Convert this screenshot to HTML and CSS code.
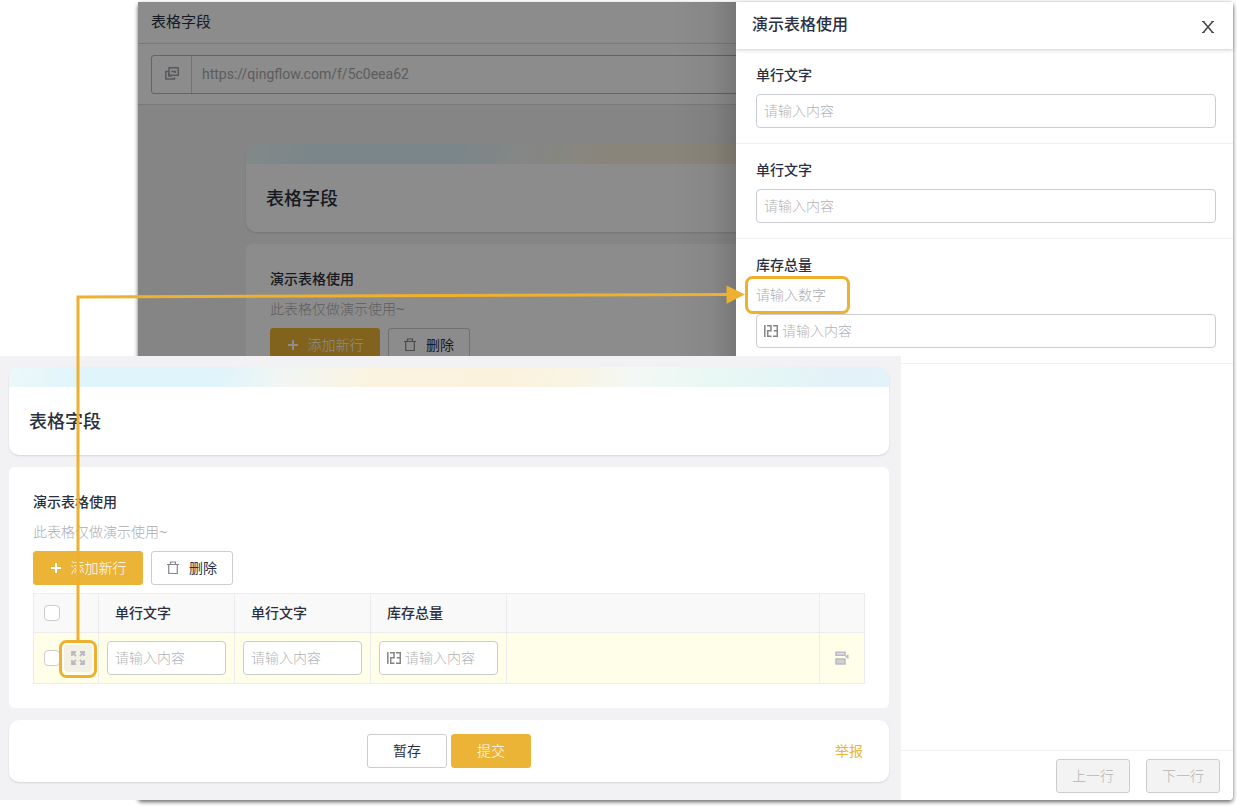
FILE: index.html
```html
<!DOCTYPE html>
<html lang="zh-CN">
<head>
<meta charset="utf-8">
<title>表格字段</title>
<link rel="stylesheet" href="styles.css">
</head>
<body>
<main class="stage">
  <div class="window">
    <section class="page" aria-label="表格字段">
      <header class="page-header">表格字段</header>
      <div class="page-toolbar">
        <div class="url-box">
          <button class="url-copy" type="button" aria-label="复制链接">
            <svg width="14" height="13" viewBox="0 0 14 13" fill="none" stroke="#a0a2aa" stroke-width="1.5"><path d="M4 .8h9.200v7.400H4z"/><path d="M4 4.500H.8v7.500h8.700V10.200M6.300 4.500h4v1.500M3.700 6v3h3"/></svg>
          </button>
          <input class="url-input" type="text" aria-label="链接" value="https://qingflow.com/f/5c0eea62" readonly>
        </div>
      </div>
      <div class="page-body">
        <div class="form">
          <div class="card title-card"><div class="banner"></div><h2 class="form-title">表格字段</h2></div>
          <div class="card table-card open">
            <h3 class="field-title">演示表格使用</h3>
            <p class="hint">此表格仅做演示使用~</p>
            <div class="actions">
              <button class="btn primary add" type="button"><svg width="12" height="12" viewBox="0 0 12 12" stroke="#fff" stroke-width="2"><path d="M6 1v10M1 6h10"/></svg>添加新行</button>
              <button class="btn remove" type="button"><svg width="12" height="14" viewBox="0 0 12 14" fill="none" stroke="#85878f" stroke-width="1.2"><path d="M0 3.5h12M3.5 3V1h5v2M1.7 3.5v9h8.6v-9"/></svg>删除</button>
            </div>
          </div>
        </div>
      </div>
    </section>

    <aside class="drawer">
      <header class="drawer-header">
        <h2 class="drawer-title">演示表格使用</h2>
        <button class="close" type="button" aria-label="关闭"><svg width="12" height="12" viewBox="0 0 12 12" fill="none" stroke="#444" stroke-width="1.5"><path d="M1.300.5l9.400 11M10.700.5L1.300 11.500"/><path d="M0 .5h2.500M9.500 .5H12M0 11.500h2.500M9.500 11.500H12" stroke-width="1"/></svg></button>
      </header>
      <div class="drawer-body">
        <div class="field">
          <label class="field-title" for="d1">单行文字</label>
          <div class="control"><input id="d1" type="text" placeholder="请输入内容"></div>
        </div>
        <div class="field">
          <label class="field-title" for="d2">单行文字</label>
          <div class="control"><input id="d2" type="text" placeholder="请输入内容"></div>
        </div>
        <div class="field">
          <label class="field-title" for="d3">库存总量</label>
          <p class="hint">请输入数字</p>
          <div class="control">
            <svg class="num" width="14" height="12" viewBox="0 0 14 12" fill="none" stroke="#858585" stroke-width="1.5"><path d="M.8 0v12M3 .7h4v5.1H3.7v5.5H7.500M9 .7h4.300v10.600H9M9.800 5.800h3.500"/></svg>
            <input id="d3" type="text" placeholder="请输入内容">
          </div>
        </div>
      </div>
      <footer class="drawer-footer">
        <button class="btn row-nav" type="button" disabled>上一行</button>
        <button class="btn row-nav" type="button" disabled>下一行</button>
      </footer>
    </aside>
  </div>

  <section class="panel" aria-label="表格填写">
    <div class="form">
      <div class="card title-card"><div class="banner"></div><h1 class="form-title">表格字段</h1></div>
      <div class="card table-card">
        <h3 class="field-title">演示表格使用</h3>
        <p class="hint">此表格仅做演示使用~</p>
        <div class="actions">
          <button class="btn primary add" type="button"><svg width="12" height="12" viewBox="0 0 12 12" stroke="#fff" stroke-width="2"><path d="M6 1v10M1 6h10"/></svg>添加新行</button>
          <button class="btn remove" type="button"><svg width="12" height="14" viewBox="0 0 12 14" fill="none" stroke="#85878f" stroke-width="1.2"><path d="M0 3.5h12M3.5 3V1h5v2M1.7 3.5v9h8.6v-9"/></svg>删除</button>
        </div>
        <table class="grid">
          <colgroup><col class="c-select"><col class="c-field"><col class="c-field"><col class="c-field"><col><col class="c-menu"></colgroup>
          <thead>
            <tr>
              <th class="select"><input class="tick" type="checkbox" aria-label="全选"></th>
              <th>单行文字</th><th>单行文字</th><th>库存总量</th><th></th><th></th>
            </tr>
          </thead>
          <tbody>
            <tr>
              <td class="select"><div class="row-tools"><input class="tick" type="checkbox" aria-label="选择此行"><button class="expand" type="button" aria-label="展开"><svg width="14" height="14" viewBox="0 0 14 14" fill="none" stroke="#b9b9c6" stroke-width="1.8"><path d="M1 5V1h4M1.500 1.500L5 5M9 1h4v4M12.500 1.500L9 5M1 9v4h4M1.500 12.500L5 9M13 9v4H9M12.500 12.500L9 9"/></svg></button></div></td>
              <td><div class="control"><input type="text" aria-label="单行文字" placeholder="请输入内容"></div></td>
              <td><div class="control"><input type="text" aria-label="单行文字" placeholder="请输入内容"></div></td>
              <td><div class="control">
                <svg class="num" width="14" height="12" viewBox="0 0 14 12" fill="none" stroke="#858585" stroke-width="1.5"><path d="M.8 0v12M3 .7h4v5.1H3.7v5.5H7.500M9 .7h4.300v10.600H9M9.800 5.800h3.500"/></svg>
                <input type="text" aria-label="库存总量" placeholder="请输入内容"></div></td>
              <td></td>
              <td class="menu"><button class="row-menu" type="button" aria-label="行操作"><svg width="14" height="14" viewBox="0 0 14 14"><path d="M1 1.200h9v3H1z" fill="#e3e3e3" stroke="#b9b9c8" stroke-width="1.500"/><path d="M1 8h9v5H1z" fill="#d2d2cc" stroke="#b9b9c8" stroke-width="1.500"/><path d="M10 5.600l3.500-2.400v5z" fill="#b9b9c8"/></svg></button></td>
            </tr>
          </tbody>
        </table>
      </div>
      <div class="card submit-card">
        <div class="submit-actions">
          <button class="btn wide" type="button">暂存</button>
          <button class="btn primary wide" type="button">提交</button>
        </div>
        <a class="report" href="#report">举报</a>
      </div>
    </div>
  </section>

  <svg class="callout" width="860" height="700" viewBox="0 0 860 700" fill="none" stroke="#edb02f" stroke-width="3" aria-hidden="true">
    <path d="M78 641V297L728 294.500"/>
    <path d="M726.500 285.500L745 294.500L726.500 303.800Z" fill="#edb02f" stroke="none"/>
    <rect x="746.500" y="277.500" width="102" height="35" rx="6"/>
    <rect x="62" y="643" width="32" height="32" rx="3" stroke="#fffff6" stroke-width="3"/>
    <rect x="60.500" y="641.500" width="35" height="35" rx="6"/>
  </svg>
</main>
</body>
</html>
```
FILE: styles.css
```css
:root {
  --ink: #2b3040;
  --muted: #acadb4;
  --accent: #ebb436;
  --line: #ccccd0;
  --rule: #ececee;
  --ground: #f2f2f4;
}

* { box-sizing: border-box; }

body {
  margin: 0;
  background: #fff;
  color: var(--ink);
  font: 14px/22px "Liberation Sans", "Noto Sans CJK SC", sans-serif;
}

h1, h2, h3, p { margin: 0; }
button, input { font: inherit; color: inherit; }
button { cursor: pointer; }

.stage {
  position: relative;
  display: flex;
  min-height: 100vh;
  padding: 2px 4px 6px 138px;
}

.window {
  flex: 1;
  display: flex;
  min-width: 0;
  border-radius: 4px;
  background: #fff;
  box-shadow: 0 2px 4px 0 rgba(0, 0, 0, 0.6);
}

/* Dimmed page behind the drawer */
.page {
  position: relative;
  flex: 1;
  display: flex;
  flex-direction: column;
  min-width: 0;
  overflow: hidden;
  background: #fff;
}

.page::after {
  content: "";
  position: absolute;
  inset: 0;
  background:
    linear-gradient(to left, rgba(0, 0, 0, 0.15), rgba(0, 0, 0, 0.04) 24px, transparent 64px),
    rgba(0, 0, 0, 0.45);
}

.page-header {
  padding: 9px 13px 10px;
  border-bottom: 1px solid #e2e2e4;
  font-size: 15px;
}

.page-toolbar {
  padding: 11px 0 10px 13px;
  border-bottom: 1px solid #dcdcde;
  box-shadow: 0 1px 3px rgba(0, 0, 0, 0.08);
}

.url-box {
  display: flex;
  width: 900px;
  height: 39px;
  border: 1px solid #b4b4ba;
  border-radius: 3px;
}

.url-copy {
  display: grid;
  place-items: center;
  width: 40px;
  padding: 0 0 2px;
  border: 0;
  border-right: 1px solid #d4d4d8;
  background: none;
}

.url-input {
  flex: 1;
  padding: 0 10px 2px;
  border: 0;
  background: none;
  color: #aaa;
  font-family: Roboto, sans-serif;
}

.page-body {
  flex: 1;
  padding: 39px 0 0 108px;
  background: var(--ground);
}

.page-body .form { width: 880px; }

/* Form cards */
.form {
  display: flex;
  flex-direction: column;
  gap: 12px;
}

.card {
  border-radius: 6px;
  background: #fff;
}

.title-card,
.submit-card {
  border-radius: 10px;
  box-shadow: 0 1px 2px rgba(0, 0, 0, 0.12);
}

.title-card { overflow: hidden; }

.banner {
  height: 20px;
  background: linear-gradient(110deg, #edf8f8, #e0f5fb 8%, #e0f4fb 24%, #f2f6f2 32%, #faf3e0 41%, #fbf2dd 56%, #f8f4e4 64%, #f3f8f5 71%, #e8f8f4 80%, #e4f5f5 88%, #e3f1fa 95%, #e4f2f9);
}

.form-title {
  padding: 24px 20px 22px;
  font-size: 18px;
  font-weight: 500;
}

.table-card {
  display: flex;
  flex-direction: column;
  gap: 8px;
  padding: 24px;
}

.open { min-height: 241px; }

.field-title {
  font-size: 14px;
  font-weight: 500;
}

.hint {
  color: var(--muted);
  font-weight: 300;
}

.actions {
  display: flex;
  gap: 8px;
}

.btn {
  display: inline-flex;
  align-items: center;
  justify-content: center;
  height: 34px;
  padding: 0 14px;
  border: 1px solid var(--line);
  border-radius: 3px;
  background: #fff;
}

.primary {
  border-color: var(--accent);
  background: var(--accent);
  color: #fff;
  font-weight: 300;
}

.add,
.remove { gap: 9px; }

.add { width: 110px; }
.remove { width: 82px; gap: 10px; }
.wide { width: 80px; }

/* Editable grid */
.grid {
  width: 100%;
  table-layout: fixed;
  border-collapse: separate;
  border-spacing: 0;
  border: solid var(--rule);
  border-width: 1px 0 0 1px;
}

.c-select { width: 65px; }
.c-field { width: 136px; }
.c-menu { width: 45px; }

.grid th,
.grid td {
  padding: 8px;
  border: solid var(--rule);
  border-width: 0 1px 1px 0;
}

.grid th {
  padding-left: 16px;
  background: #f9f9f9;
  font-weight: 500;
  text-align: left;
}

.grid td { background: #fffee9; }
.grid .select { padding: 0 0 0 10px; }

.tick {
  appearance: none;
  display: block;
  flex: none;
  width: 16px;
  height: 16px;
  margin: 0;
  border: 1px solid var(--line);
  border-radius: 4px;
  background: #fff;
}

.row-tools {
  display: flex;
  align-items: center;
  gap: 4px;
}

.expand {
  display: grid;
  place-items: center;
  width: 28px;
  height: 28px;
  padding: 0;
  border: 0;
  border-radius: 4px;
  background: #f3f1e3;
}

.grid .menu { padding: 0; }

.row-menu {
  display: grid;
  place-items: center;
  width: 100%;
  padding: 0;
  border: 0;
  background: none;
}

.control {
  display: flex;
  align-items: center;
  gap: 4px;
  height: 34px;
  padding: 0 7px;
  border: 1px solid var(--line);
  border-radius: 4px;
  background: #fff;
}

.num { flex: none; }

.control input {
  flex: 1;
  min-width: 0;
  width: 0;
  padding: 0;
  border: 0;
  outline: 0;
  background: none;
}

.control input::placeholder {
  color: #b3b3b3;
  font-weight: 300;
  opacity: 1;
}

.submit-card {
  display: grid;
  grid-template-columns: 1fr auto 1fr;
  align-items: center;
  padding: 14px 26px;
}

.submit-actions {
  grid-column: 2;
  display: flex;
  gap: 4px;
}

.report {
  justify-self: end;
  color: var(--accent);
  text-decoration: none;
}

/* Row detail drawer */
.drawer {
  flex: 0 0 497px;
  display: flex;
  flex-direction: column;
  border-radius: 0 0 4px 0;
  background: #fff;
}

.drawer-header {
  display: flex;
  align-items: center;
  justify-content: space-between;
  height: 47px;
  padding: 0 19px 2px 16px;
  box-shadow: 0 1px 4px rgba(0, 0, 0, 0.2);
}

.drawer-title {
  font-size: 16px;
  font-weight: 500;
}

.close {
  padding: 4px 0 0;
  border: 0;
  background: none;
}

.close svg { display: block; }

.drawer-body { flex: 1; }

.field {
  display: flex;
  flex-direction: column;
  gap: 8px;
  padding: 15px 17px 15px 20px;
  border-bottom: 1px solid #f2f2f2;
}

.drawer-footer {
  display: flex;
  justify-content: flex-end;
  gap: 16px;
  padding: 8px 13px 7px;
  border-top: 1px solid #f2f2f2;
}

.row-nav {
  width: 74px;
  background: #f3f3f3;
  color: #b3b3b3;
  font-weight: 300;
  cursor: default;
}

/* Enlarged form laid over the window */
.panel {
  position: absolute;
  left: 0;
  bottom: 6px;
  width: 901px;
  padding: 11px 12px 18px 9px;
  background: var(--ground);
}

.callout {
  position: absolute;
  left: 0;
  top: 0;
  pointer-events: none;
}
```
